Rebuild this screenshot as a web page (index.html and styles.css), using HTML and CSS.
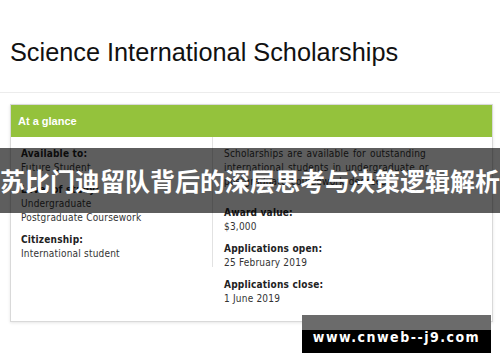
FILE: index.html
```html
<!DOCTYPE html>
<html lang="en">
  <head>
    <meta charset="UTF-8" />
    <meta name="viewport" content="width=device-width, initial-scale=1.0" />
    <title>Science International Scholarships</title>
    <link rel="stylesheet" href="styles.css">
  </head>
  <body>
    <header class="page-head">
      <h1>Science International Scholarships</h1>
    </header>

    <div class="glance">
      <div class="glance-title">At a glance</div>
      <div class="glance-body">
        <div class="glance-left">
          <div class="item">
            <div class="label">Available to:</div>
            <div>Future Student</div>
          </div>
          <div class="item">
            <div class="label">Level of study:</div>
            <div>Undergraduate</div>
            <div>Postgraduate Coursework</div>
          </div>
          <div class="item">
            <div class="label">Citizenship:</div>
            <div>International student</div>
          </div>
        </div>

        <div class="glance-right">
          <p class="summary">Scholarships are available for outstanding international students in undergraduate or postgraduate coursework degrees.</p>
          <div class="item">
            <div class="label">Award value:</div>
            <div>$3,000</div>
          </div>
          <div class="item">
            <div class="label">Applications open:</div>
            <div>25 February 2019</div>
          </div>
          <div class="item">
            <div class="label">Applications close:</div>
            <div>1 June 2019</div>
          </div>
        </div>
      </div>
    </div>

    <!-- overlays -->
    <div class="headline">苏比门迪留队背后的深层思考与决策逻辑解析</div>
    <div class="stamp">www.cnweb--j9.com</div>
  </body>
</html>
```

FILE: styles.css
```css
body {
  margin: 0;
  padding: 0;
  background: white;
  color: #333;
  font-family: "DejaVu Sans Condensed", "DejaVu Sans", sans-serif;
  font-stretch: semi-condensed;
  font-size: 10px;
  letter-spacing: 0.2px;
  width: 500px;
  height: 362px;
  overflow: hidden;
  position: relative;
}

.page-head {
  padding: 38px 10px 26px;
  border-bottom: 1px solid #ececec;
}

.page-head h1 {
  margin: 0;
  font-family: "Liberation Sans", Arial, sans-serif;
  font-weight: normal;
  font-size: 25.3px;
  line-height: 28px;
  letter-spacing: 0;
  color: #111;
}

.glance {
  margin: 11px 7px 0 10px;
  border: 1px solid #d9d9d9;
  box-shadow: 0 1px 3px rgba(0, 0, 0, 0.1);
}

.glance-title {
  background: #94c23c;
  color: white;
  font-family: "Liberation Sans", Arial, sans-serif;
  font-weight: bold;
  font-size: 11px;
  letter-spacing: 0;
  line-height: 32px;
  height: 32px;
  padding: 0 7px;
}

.glance-body {
  display: flex;
  align-items: flex-start;
  line-height: 14px;
}

.glance-left {
  width: 202px;
  box-sizing: border-box;
  padding: 10px 10px 6px;
  border-right: 1px solid #e2e2e2;
}

.glance-right {
  flex: 1;
  padding: 10px 20px 15px 11px;
}

.summary {
  margin: 0 0 17px;
  max-width: 245px;
  word-spacing: 1px;
}

.item {
  margin-bottom: 8px;
}

.item:last-child {
  margin-bottom: 0;
}

.label {
  font-weight: bold;
  color: #222;
}

.headline {
  position: absolute;
  left: 0;
  top: 148px;
  width: 500px;
  height: 65px;
  background: rgba(0, 0, 0, 0.63);
  color: white;
  font-family: "Noto Sans CJK SC", sans-serif;
  font-weight: bold;
  font-size: 25px;
  letter-spacing: 0;
  line-height: 65px;
  text-align: center;
  white-space: nowrap;
}

.stamp {
  position: absolute;
  left: 302px;
  top: 315px;
  width: 189px;
  height: 38px;
  box-sizing: border-box;
  padding-top: 14px;
  background: linear-gradient(#6b6b6b 15px, #000 15px);
  color: white;
  font-family: "DejaVu Sans", sans-serif;
  font-weight: bold;
  font-size: 14px;
  letter-spacing: 1.5px;
  line-height: 16px;
  text-align: center;
  white-space: nowrap;
}
```
